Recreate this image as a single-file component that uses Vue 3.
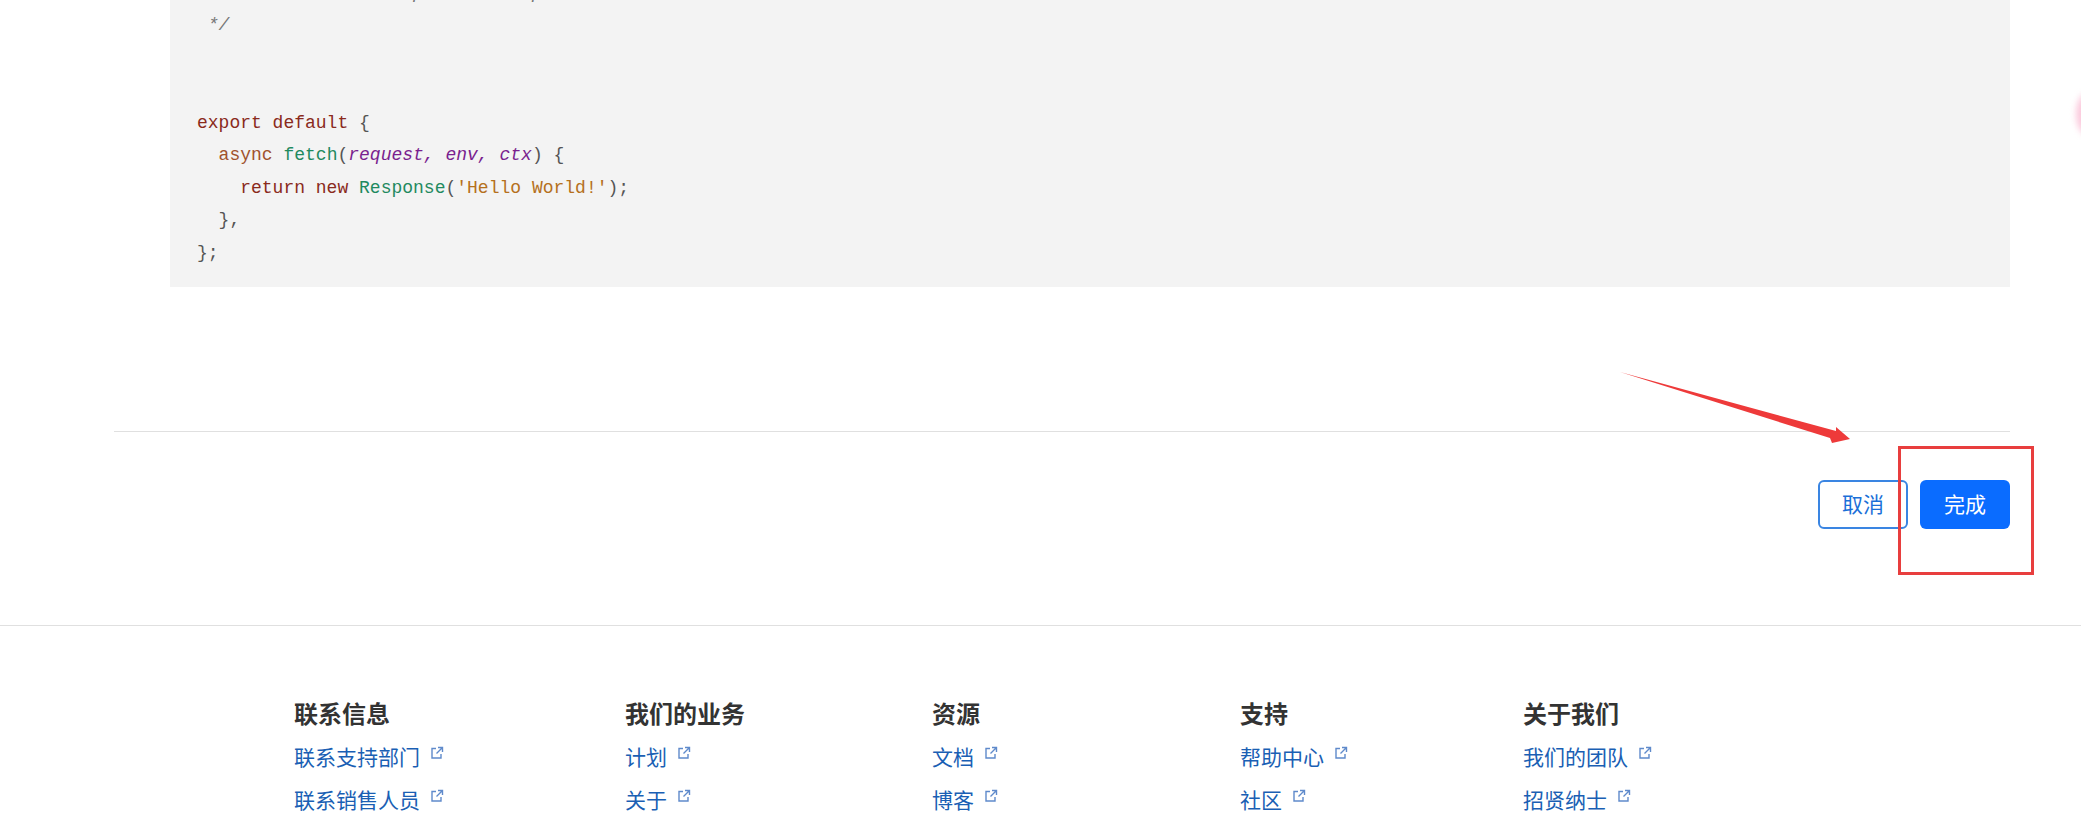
<script setup>
const columns = [
  { title: '联系信息', width: 331, links: ['联系支持部门', '联系销售人员'] },
  { title: '我们的业务', width: 307, links: ['计划', '关于'] },
  { title: '资源', width: 308, links: ['文档', '博客'] },
  { title: '支持', width: 283, links: ['帮助中心', '社区'] },
  { title: '关于我们', width: 200, links: ['我们的团队', '招贤纳士'] },
]
</script>

<template>
  <div class="page">
    <main class="editor">
      <section class="code">
        <div class="line clipped cm i0">* Learn more at https://developers.cloudflare.com/workers/</div>
        <div class="line cm i0">*/</div>
        <div class="line"></div>
        <div class="line"></div>
        <div class="line"><span class="kw">export default</span> {</div>
        <div class="line i1"><span class="kw2">async</span> <span class="fn">fetch</span>(<span class="arg">request, env, ctx</span>) {</div>
        <div class="line i2"><span class="kw">return new</span> <span class="fn">Response</span>(<span class="str">'Hello World!'</span>);</div>
        <div class="line i1">},</div>
        <div class="line">};</div>
      </section>
      <hr class="rule" />
      <div class="actions">
        <button class="btn ghost">取消</button>
        <button class="btn primary">完成</button>
      </div>
    </main>

    <footer class="footer">
      <div class="cols">
        <div v-for="c in columns" :key="c.title" class="col" :style="{ width: c.width + 'px' }">
          <h4>{{ c.title }}</h4>
          <a v-for="l in c.links" :key="l" class="link">
            {{ l }}
            <svg class="ext" viewBox="0 0 14 14" width="14" height="14" fill="none" stroke="#5f8acb" stroke-width="1.4">
              <path d="M6 2.500H2v9.500h9V8" />
              <path d="M8 1.500h4.500V6M12.500 1.500 6.500 7.500" />
            </svg>
          </a>
        </div>
      </div>
    </footer>

    <svg class="marks" width="2081" height="824" viewBox="0 0 2081 824">
      <path d="M1620 372 1836 431 1836 427 1850 439 1832 443 1830 438Z" fill="#ee3a3a" />
      <rect x="1899.500" y="447.500" width="133" height="126" fill="none" stroke="#e83e3e" stroke-width="3" />
    </svg>
    <div class="blob"></div>
  </div>
</template>

<style>
html, body { margin: 0; background: #fff; overflow: hidden; }
</style>

<style scoped>
.page { position: relative; width: 2081px; height: 824px; overflow: hidden; background: #fff; font-family: "Liberation Sans", "Noto Sans CJK SC", sans-serif; }
.editor { padding: 0 71px 0 114px; }
.code { margin-left: 56px; height: 287px; background: #f3f3f3; padding-left: 27px; box-sizing: border-box; font: 18px/32.500px "Liberation Mono", monospace; color: #555; white-space: pre; overflow: hidden; }
.clipped { margin-top: -23.500px; }
.line { height: 32.500px; }
.i0 { padding-left: 10.800px; }
.i1 { padding-left: 21.600px; }
.i2 { padding-left: 43.200px; }
.cm { color: #777; font-style: italic; }
.kw { color: #8a2a1c; }
.kw2 { color: #a0522d; }
.fn { color: #1f8a5f; }
.arg { color: #7a1f8f; font-style: italic; }
.str { color: #b5701c; }
.rule { margin: 144px 0 0; border: 0; border-top: 1px solid #e0e0e0; }
.actions { display: flex; justify-content: flex-end; gap: 12px; margin-top: 48px; }
.btn { width: 90px; height: 49px; border-radius: 6px; font: 21px "Noto Sans CJK SC", sans-serif; box-sizing: border-box; padding: 0 0 3px; }
.ghost { background: #fff; border: 2px solid #3a85e2; color: #1a6fd8; }
.primary { background: #0a6cff; border: 0; color: #fff; }
.footer { margin-top: 96px; border-top: 1px solid #e0e0e0; padding: 72px 0 0 294px; }
.cols { display: flex; }
.col { display: flex; flex-direction: column; align-items: flex-start; }
h4 { margin: 0 0 6px; font: 700 24px/30px "Noto Sans CJK SC", sans-serif; color: #333; }
.link { display: flex; align-items: center; gap: 10px; height: 43px; font: 21px/30px "Noto Sans CJK SC", sans-serif; color: #1a5fb4; white-space: nowrap; }
.ext { margin-top: -6px; }
.marks { position: absolute; inset: 0; pointer-events: none; }
.blob { position: absolute; left: 2076px; top: 93px; width: 24px; height: 42px; border-radius: 50%; background: #fbc9dc; filter: blur(3px); }
</style>
